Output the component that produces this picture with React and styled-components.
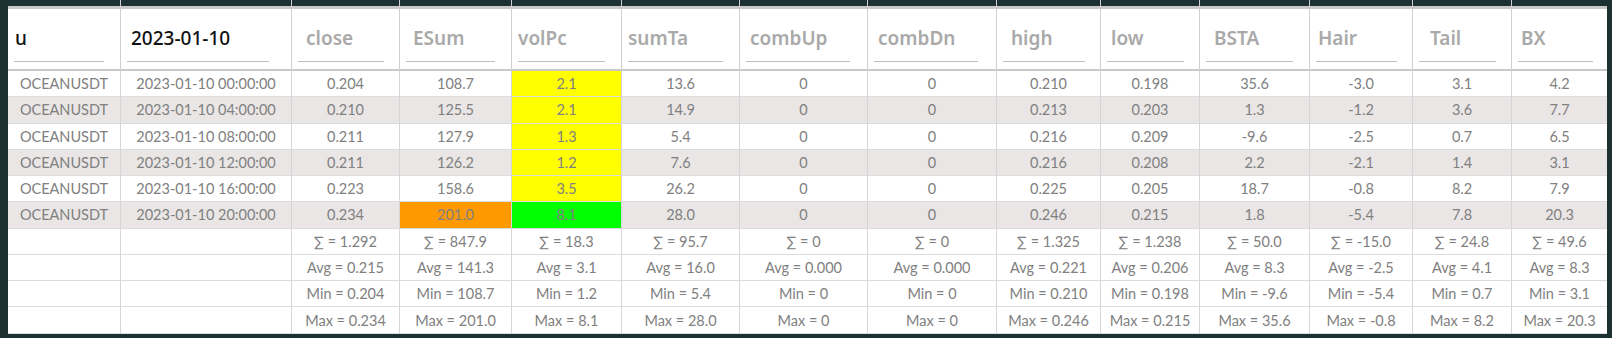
import React from "react";
import styled, { createGlobalStyle } from "styled-components";

const GlobalStyle = createGlobalStyle`
  html, body {
    margin: 0;
    padding: 0;
    background: #1d3132;
  }
`;

const Frame = styled.div`
  width: 1612px;
  height: 338px;
  box-sizing: border-box;
  padding: 0 5px 0 8px;
  background: #1d3132;
  overflow: hidden;
`;

const Table = styled.table`
  width: 1599px;
  table-layout: fixed;
  border-collapse: separate;
  border-spacing: 0;
  font-family: "Lato", "Noto Sans", sans-serif;
`;

const SpacerCell = styled.td`
  height: 9px;
  padding: 0;
  box-sizing: border-box;
  border-right: 1px solid #cfcfcf;
  border-bottom: 3px solid #c8c8c8;
  background: #1d3132;
  &:last-child {
    border-right: none;
  }
`;

const Th = styled.th`
  height: 62px;
  box-sizing: border-box;
  padding: 0 6px;
  background: #fff;
  border-right: 1px solid #cfcfcf;
  border-bottom: 2px solid #c8c8c8;
  text-align: left;
  vertical-align: bottom;
  &:last-child {
    border-right: none;
  }
`;

const FilterInput = styled.input`
  display: block;
  width: 90%;
  box-sizing: border-box;
  margin: 0 0 7px 0;
  padding: 0 0 10px ${(p) => p.$indent}px;
  border: none;
  border-bottom: 1px solid #bdbdbd;
  outline: none;
  background: transparent;
  font-family: "Noto Sans", "Open Sans", sans-serif;
  font-size: 19px;
  font-weight: ${(p) => (p.value ? 500 : 600)};
  color: #111;
  &::placeholder {
    color: #a9a9a9;
    opacity: 1;
  }
`;

const Row = styled.tr`
  background: ${(p) => (p.$striped ? "#e9e6e5" : "#fff")};
`;

const Td = styled.td`
  height: 26.27px;
  box-sizing: border-box;
  padding: 0 4px;
  border-right: 1px solid #d6d6d6;
  border-bottom: 1px solid #dcdcdc;
  text-align: center;
  font-size: 14.5px;
  color: #808080;
  white-space: nowrap;
  overflow: hidden;
  background: ${(p) => p.$bg || "transparent"};
  &:last-child {
    border-right: none;
  }
`;

const widths = [113, 171, 108, 112, 110, 118, 128, 129, 104, 99, 110, 103, 99, 95];

const headers = [
  { value: "u", indent: 1 },
  { value: "2023-01-10", indent: 4 },
  { ph: "close", indent: 8 },
  { ph: "ESum", indent: 7 },
  { ph: "volPc", indent: 0 },
  { ph: "sumTa", indent: 0 },
  { ph: "combUp", indent: 4 },
  { ph: "combDn", indent: 4 },
  { ph: "high", indent: 8 },
  { ph: "low", indent: 4 },
  { ph: "BSTA", indent: 8 },
  { ph: "Hair", indent: 2 },
  { ph: "Tail", indent: 11 },
  { ph: "BX", indent: 3 },
];

const Y = "#ffff00";
const O = "#ff9900";
const G = "#00ff00";

const rows = [
  ["00:00:00", "0.204", "108.7", ["2.1", Y], "13.6", "0", "0", "0.210", "0.198", "35.6", "-3.0", "3.1", "4.2"],
  ["04:00:00", "0.210", "125.5", ["2.1", Y], "14.9", "0", "0", "0.213", "0.203", "1.3", "-1.2", "3.6", "7.7"],
  ["08:00:00", "0.211", "127.9", ["1.3", Y], "5.4", "0", "0", "0.216", "0.209", "-9.6", "-2.5", "0.7", "6.5"],
  ["12:00:00", "0.211", "126.2", ["1.2", Y], "7.6", "0", "0", "0.216", "0.208", "2.2", "-2.1", "1.4", "3.1"],
  ["16:00:00", "0.223", "158.6", ["3.5", Y], "26.2", "0", "0", "0.225", "0.205", "18.7", "-0.8", "8.2", "7.9"],
  ["20:00:00", "0.234", ["201.0", O], ["8.1", G], "28.0", "0", "0", "0.246", "0.215", "1.8", "-5.4", "7.8", "20.3"],
];

const summary = [
  ["∑", ["1.292", "847.9", "18.3", "95.7", "0", "0", "1.325", "1.238", "50.0", "-15.0", "24.8", "49.6"]],
  ["Avg", ["0.215", "141.3", "3.1", "16.0", "0.000", "0.000", "0.221", "0.206", "8.3", "-2.5", "4.1", "8.3"]],
  ["Min", ["0.204", "108.7", "1.2", "5.4", "0", "0", "0.210", "0.198", "-9.6", "-5.4", "0.7", "3.1"]],
  ["Max", ["0.234", "201.0", "8.1", "28.0", "0", "0", "0.246", "0.215", "35.6", "-0.8", "8.2", "20.3"]],
];

export default function App() {
  return (
    <>
      <GlobalStyle />
      <Frame>
        <Table>
          <colgroup>
            {widths.map((w, i) => (
              <col key={i} style={{ width: w }} />
            ))}
          </colgroup>
          <thead>
            <tr>
              {widths.map((w, i) => (
                <SpacerCell key={i} />
              ))}
            </tr>
            <tr>
              {headers.map((h, i) => (
                <Th key={i}>
                  <FilterInput
                    readOnly
                    value={h.value || ""}
                    placeholder={h.ph}
                    $indent={h.indent}
                  />
                </Th>
              ))}
            </tr>
          </thead>
          <tbody>
            {rows.map(([time, ...cells], r) => (
              <Row key={r} $striped={r % 2 === 1}>
                <Td>OCEANUSDT</Td>
                <Td>2023-01-10 {time}</Td>
                {cells.map((c, i) =>
                  Array.isArray(c) ? (
                    <Td key={i} $bg={c[1]}>
                      {c[0]}
                    </Td>
                  ) : (
                    <Td key={i}>{c}</Td>
                  )
                )}
              </Row>
            ))}
            {summary.map(([label, vals]) => (
              <Row key={label}>
                <Td />
                <Td />
                {vals.map((v, i) => (
                  <Td key={i}>
                    {label} = {v}
                  </Td>
                ))}
              </Row>
            ))}
          </tbody>
        </Table>
      </Frame>
    </>
  );
}
